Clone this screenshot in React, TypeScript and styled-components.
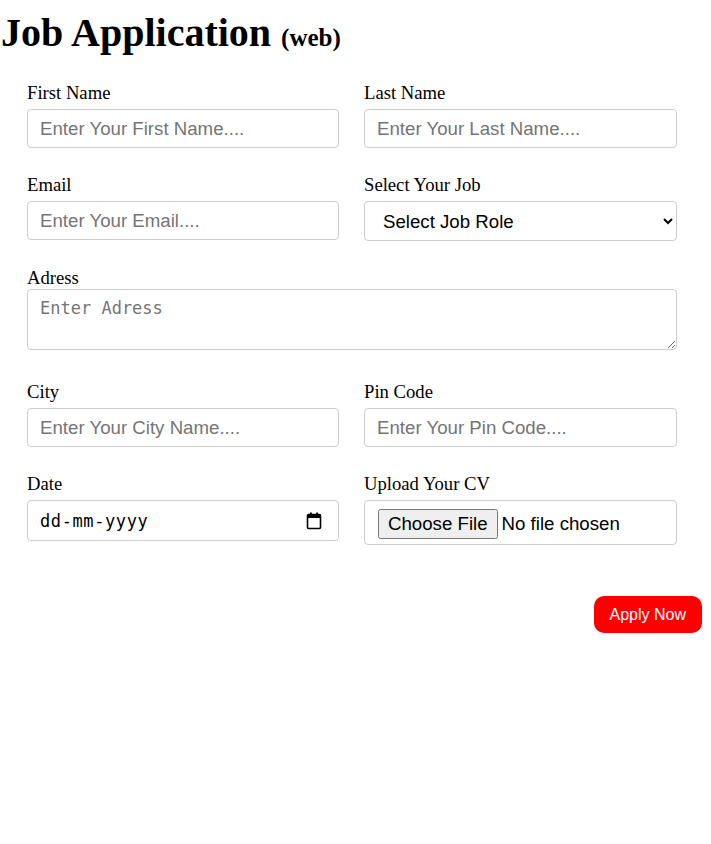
import React from 'react';
import styled, { createGlobalStyle } from 'styled-components';

const GlobalStyle = createGlobalStyle`
  body {
    margin: 0;
    background: #ffffff;
    font-family: "Liberation Serif", "Times New Roman", serif;
    color: #000000;
  }
`;

const CalendarIcon = () => (
  <svg width="16" height="18" viewBox="0 0 16 18" aria-hidden="true">
    <rect x="4" y="0.5" width="1.8" height="3" fill="#000" />
    <rect x="10.2" y="0.5" width="1.8" height="3" fill="#000" />
    <rect x="1.5" y="2.5" width="13" height="14" rx="1.2" fill="none" stroke="#000" strokeWidth="1.6" />
    <rect x="1.5" y="2.5" width="13" height="3.5" fill="#000" />
  </svg>
);

export default function App() {
  return (
    <>
      <GlobalStyle />
      <Page>
        <Title>
          Job Application <TitleTag>(web)</TitleTag>
        </Title>
        <Form onSubmit={(e) => e.preventDefault()}>
          <Field>
            <Label htmlFor="first">First Name</Label>
            <Input id="first" type="text" placeholder="Enter Your First Name...." />
          </Field>
          <Field>
            <Label htmlFor="last">Last Name</Label>
            <Input id="last" type="text" placeholder="Enter Your Last Name...." />
          </Field>

          <Field>
            <Label htmlFor="email">Email</Label>
            <Input id="email" type="email" placeholder="Enter Your Email...." />
          </Field>
          <Field>
            <Label htmlFor="job">Select Your Job</Label>
            <Select id="job" defaultValue="">
              <option value="">Select Job Role</option>
              <option value="frontend">Frontend Developer</option>
              <option value="backend">Backend Developer</option>
              <option value="fullstack">Full Stack Developer</option>
            </Select>
          </Field>

          <Field $wide>
            <Label htmlFor="adress" $tight>
              Adress
            </Label>
            <TextArea id="adress" placeholder="Enter Adress" />
          </Field>

          <Field>
            <Label htmlFor="city">City</Label>
            <Input id="city" type="text" placeholder="Enter Your City Name...." />
          </Field>
          <Field>
            <Label htmlFor="pin">Pin Code</Label>
            <Input id="pin" type="text" placeholder="Enter Your Pin Code...." />
          </Field>

          <Field>
            <Label htmlFor="date">Date</Label>
            <DateBox>
              <DateText id="date" type="text" placeholder="dd-mm-yyyy" />
              <CalendarIcon />
            </DateBox>
          </Field>
          <Field>
            <Label htmlFor="cv">Upload Your CV</Label>
            <FileInput id="cv" type="file" />
          </Field>
        </Form>
        <Actions>
          <Submit type="button">Apply Now</Submit>
        </Actions>
      </Page>
    </>
  );
}

const Page = styled.div`
  width: 711px;
  padding-top: 10px;
  padding-bottom: 40px;
`;

const Title = styled.h1`
  margin: 0;
  padding-left: 1px;
  font-size: 40px;
  font-weight: bold;
  line-height: 46px;
`;

const TitleTag = styled.span`
  font-size: 25px;
`;

const Form = styled.form`
  display: grid;
  grid-template-columns: 312px 313px;
  column-gap: 25px;
  row-gap: 26px;
  padding: 21px 34px 0 27px;
`;

const Field = styled.div<{ $wide?: boolean }>`
  display: flex;
  flex-direction: column;
  grid-column: ${(p) => (p.$wide ? '1 / -1' : 'auto')};
  margin-bottom: ${(p) => (p.$wide ? '5px' : '0')};
`;

const Label = styled.label<{ $tight?: boolean }>`
  display: block;
  font-size: 18.67px;
  line-height: 21px;
  margin-bottom: ${(p) => (p.$tight ? '1px' : '6px')};
`;

const control = `
  box-sizing: border-box;
  width: 100%;
  border: 1px solid #cccccc;
  border-radius: 4px;
  background: #ffffff;
  color: #000000;
  margin: 0;
`;

const Input = styled.input`
  ${control};
  height: 39px;
  padding: 0 12px;
  font-family: "Liberation Sans", Arial, sans-serif;
  font-size: 18.67px;

  &::placeholder {
    color: #757575;
  }
`;

const Select = styled.select`
  ${control};
  height: 40px;
  padding: 0 8px 0 14px;
  font-family: "Liberation Sans", Arial, sans-serif;
  font-size: 18.67px;
`;

const TextArea = styled.textarea`
  ${control};
  height: 61px;
  padding: 8px 12px;
  font-family: "DejaVu Sans Mono", monospace;
  font-size: 17px;
  resize: both;

  &::placeholder {
    color: #757575;
  }
`;

const DateBox = styled.div`
  ${control};
  height: 41px;
  display: flex;
  align-items: center;
  padding: 0 16px 0 12px;
`;

const DateText = styled.input`
  flex: 1;
  min-width: 0;
  border: none;
  outline: none;
  padding: 0;
  background: transparent;
  font-family: "DejaVu Sans Mono", monospace;
  font-size: 17px;
  letter-spacing: 0.6px;

  &::placeholder {
    color: #000000;
  }
`;

const FileInput = styled.input`
  ${control};
  height: 45px;
  padding: 8px 13px;
  font-family: "Liberation Sans", Arial, sans-serif;
  font-size: 18.67px;

  &::file-selector-button {
    font-family: "Liberation Sans", Arial, sans-serif;
    font-size: 18.67px;
    padding: 2px 8px;
    margin-right: 4px;
  }
`;

const Actions = styled.div`
  display: flex;
  justify-content: flex-end;
  padding: 51px 9px 0 0;
`;

const Submit = styled.button`
  border: none;
  border-radius: 10px;
  background: #ff0000;
  color: #ffffff;
  padding: 9px 16px;
  font-family: "Liberation Sans", Arial, sans-serif;
  font-size: 16px;
  line-height: 19px;
  cursor: pointer;
`;
